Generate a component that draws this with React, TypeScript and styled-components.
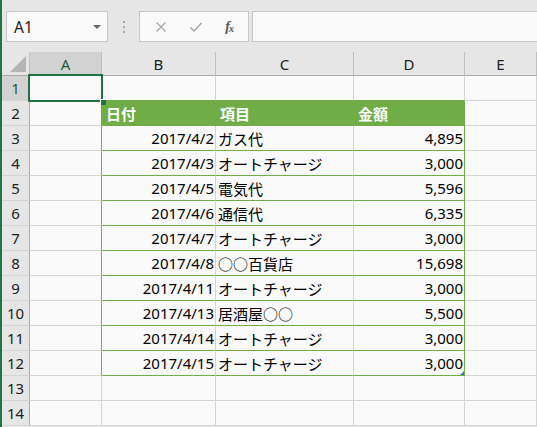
import React from 'react';
import styled, { createGlobalStyle } from 'styled-components';

const GlobalStyle = createGlobalStyle`
  html, body {
    margin: 0;
    padding: 0;
    background: #e6e6e6;
  }
  * { box-sizing: border-box; }
`;

const GREEN = '#70ad47';
const EXCEL = '#217346';
const GRID = '#d4d4d4';
const FONT = `"Noto Sans", "Noto Sans CJK JP", sans-serif`;

const Window = styled.div`
  width: 537px;
  height: 427px;
  overflow: hidden;
  background: #e6e6e6;
  border-left: 2px solid ${EXCEL};
  font-family: ${FONT};
  color: #000;
`;

const FormulaBar = styled.div`
  display: flex;
  align-items: stretch;
  height: 52px;
  padding: 11px 0 10px 4px;
`;

const NameBox = styled.div`
  width: 102px;
  display: flex;
  align-items: center;
  justify-content: space-between;
  padding: 0 6px 0 7px;
  background: #f9f9f9;
  border: 1px solid #c6c6c6;
  font-size: 15.5px;
  color: #222;
`;

const Caret = styled.span`
  width: 0;
  height: 0;
  border-left: 4px solid transparent;
  border-right: 4px solid transparent;
  border-top: 4px solid #6a6a6a;
`;

const Grip = styled.div`
  width: 31px;
  display: flex;
  flex-direction: column;
  align-items: center;
  justify-content: center;
  gap: 3px;

  span {
    width: 2px;
    height: 2px;
    background: #a8a8a8;
  }
`;

const FxBox = styled.div`
  width: 110px;
  display: flex;
  align-items: center;
  justify-content: space-around;
  padding: 0 4px;
  background: #f9f9f9;
  border: 1px solid #c6c6c6;
`;

const FxLabel = styled.i`
  font-family: "Liberation Serif", serif;
  font-weight: bold;
  font-size: 14px;
  color: #555;
  letter-spacing: -1px;

  sub {
    font-size: 10px;
    vertical-align: -1px;
  }
`;

const FormulaInput = styled.div`
  flex: 1;
  margin-left: 3px;
  background: #f9f9f9;
  border: 1px solid #c6c6c6;
  border-right: none;
`;

const Sheet = styled.div`
  display: grid;
  grid-template-columns: 28px 72px 114px 138px 111px 1fr;
  grid-template-rows: 24px;
  grid-auto-rows: 25px;
  background: #fafafa;
  font-size: 15px;
`;

const Corner = styled.div`
  background: #e6e6e6;
  border-right: 1px solid #c0c0c0;
  border-bottom: 1px solid #ababab;
  display: flex;
  align-items: flex-end;
  justify-content: flex-end;
  padding: 0 3px 3px 0;
`;

const ColHead = styled.div<{ $selected?: boolean }>`
  display: flex;
  align-items: center;
  justify-content: center;
  background: ${(p) => (p.$selected ? '#d2d2d2' : '#e6e6e6')};
  color: ${(p) => (p.$selected ? '#1d5e3a' : '#222')};
  border-right: 1px solid #c0c0c0;
  border-bottom: 1px solid #ababab;
  padding-top: 1px;
`;

const RowHead = styled.div<{ $selected?: boolean }>`
  display: flex;
  align-items: center;
  justify-content: center;
  background: ${(p) => (p.$selected ? '#d2d2d2' : '#e6e6e6')};
  color: ${(p) => (p.$selected ? '#1d5e3a' : '#222')};
  border-right: 1px solid #ababab;
  border-bottom: 1px solid ${GRID};
`;

type Align = 'left' | 'right';

const Cell = styled.div<{
  $align?: Align;
  $right?: string;
  $bottom?: string;
  $head?: boolean;
  $active?: boolean;
  $resize?: boolean;
}>`
  position: relative;
  display: flex;
  align-items: center;
  justify-content: ${(p) => (p.$align === 'right' ? 'flex-end' : 'flex-start')};
  padding: ${(p) => (p.$head ? '0 0 0 4px' : p.$align === 'right' ? '0 1px 0 0' : '0 0 0 2px')};
  white-space: nowrap;
  background: ${(p) => (p.$head ? GREEN : 'transparent')};
  color: ${(p) => (p.$head ? '#fff' : '#000')};
  font-weight: ${(p) => (p.$head ? 700 : 400)};
  border-right: 1px solid ${(p) => p.$right || GRID};
  border-bottom: 1px solid ${(p) => p.$bottom || GRID};

  ${(p) =>
    p.$active &&
    `
    z-index: 2;
    &::after {
      content: '';
      position: absolute;
      top: -2px;
      left: -2px;
      right: -2px;
      bottom: -2px;
      border: 2px solid ${EXCEL};
      pointer-events: none;
    }
    &::before {
      content: '';
      position: absolute;
      right: -5px;
      bottom: -5px;
      width: 5px;
      height: 5px;
      background: ${EXCEL};
      border-left: 1px solid #fff;
      border-top: 1px solid #fff;
      z-index: 3;
    }
  `}

  ${(p) =>
    p.$resize &&
    `
    &::after {
      content: '';
      position: absolute;
      right: 0;
      bottom: 0;
      width: 0;
      height: 0;
      border-left: 4px solid transparent;
      border-bottom: 4px solid #4472c4;
    }
  `}
`;

const Glyph = styled.svg`
  display: block;
`;

const columns = ['A', 'B', 'C', 'D', 'E'];

const records = [
  ['2017/4/2', 'ガス代', '4,895'],
  ['2017/4/3', 'オートチャージ', '3,000'],
  ['2017/4/5', '電気代', '5,596'],
  ['2017/4/6', '通信代', '6,335'],
  ['2017/4/7', 'オートチャージ', '3,000'],
  ['2017/4/8', '○○百貨店', '15,698'],
  ['2017/4/11', 'オートチャージ', '3,000'],
  ['2017/4/13', '居酒屋○○', '5,500'],
  ['2017/4/14', 'オートチャージ', '3,000'],
  ['2017/4/15', 'オートチャージ', '3,000'],
];

const App: React.FC = () => {
  return (
    <Window>
      <GlobalStyle />
      <FormulaBar>
        <NameBox>
          <span>A1</span>
          <Caret />
        </NameBox>
        <Grip>
          <span />
          <span />
          <span />
        </Grip>
        <FxBox>
          <Glyph width="12" height="12" viewBox="0 0 12 12">
            <path d="M1.5 1.5 L10.5 10.5 M10.5 1.5 L1.5 10.5" stroke="#a6a6a6" strokeWidth="1.2" fill="none" />
          </Glyph>
          <Glyph width="14" height="12" viewBox="0 0 14 12">
            <path d="M1.5 6.5 L5 10 L12.5 2" stroke="#a6a6a6" strokeWidth="1.4" fill="none" />
          </Glyph>
          <FxLabel>
            f<sub>x</sub>
          </FxLabel>
        </FxBox>
        <FormulaInput />
      </FormulaBar>

      <Sheet>
        <Corner>
          <Glyph width="16" height="16" viewBox="0 0 16 16">
            <polygon points="16,0 16,16 0,16" fill="#b5b5b5" />
          </Glyph>
        </Corner>
        {columns.map((c) => (
          <ColHead key={c} $selected={c === 'A'}>
            {c}
          </ColHead>
        ))}

        {/* row 1 */}
        <RowHead $selected>1</RowHead>
        <Cell $active />
        <Cell $bottom={GREEN} />
        <Cell $bottom={GREEN} />
        <Cell $bottom={GREEN} />
        <Cell />

        {/* row 2: table header */}
        <RowHead>2</RowHead>
        <Cell $right={GREEN} />
        <Cell $head $right={GREEN} $bottom={GREEN}>日付</Cell>
        <Cell $head $right={GREEN} $bottom={GREEN}>項目</Cell>
        <Cell $head $right={GREEN} $bottom={GREEN}>金額</Cell>
        <Cell />

        {records.map(([date, item, amount], i) => (
          <React.Fragment key={i}>
            <RowHead>{i + 3}</RowHead>
            <Cell $right={GREEN} />
            <Cell $align="right" $bottom={GREEN}>{date}</Cell>
            <Cell $bottom={GREEN}>{item}</Cell>
            <Cell $align="right" $right={GREEN} $bottom={GREEN} $resize={i === records.length - 1}>
              {amount}
            </Cell>
            <Cell />
          </React.Fragment>
        ))}

        {[13, 14].map((n) => (
          <React.Fragment key={n}>
            <RowHead>{n}</RowHead>
            <Cell />
            <Cell />
            <Cell />
            <Cell />
            <Cell />
          </React.Fragment>
        ))}
      </Sheet>
    </Window>
  );
};

export default App;
